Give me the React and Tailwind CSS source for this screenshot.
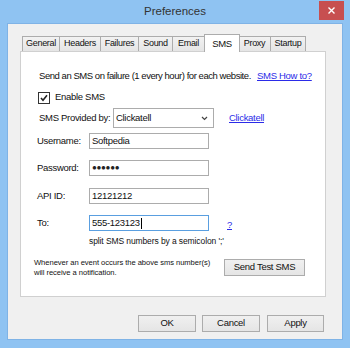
import React from "react";

const F = { fontFamily: '"Liberation Sans", Arial, sans-serif' };

function Tab({ label, w, selected }) {
  if (selected) {
    return (
      <div
        className="h-[18px] -mb-[1px] border border-b-0 border-[#acacac] bg-white flex items-start justify-center pt-[2px] text-[9.5px] tracking-[-0.3px] text-[#111] relative z-10"
        style={{ width: w }}
      >
        {label}
      </div>
    );
  }
  return (
    <div
      className="h-[15px] border border-b-0 border-[#acacac] -ml-[1px] first:ml-0 bg-gradient-to-b from-[#f2f2f2] to-[#e5e5e5] flex items-center justify-center text-[9px] tracking-[-0.3px] text-[#111]"
      style={{ width: w }}
    >
      {label}
    </div>
  );
}

function Btn({ children, w }) {
  return (
    <div
      className="h-[17px] border border-[#acacac] bg-gradient-to-b from-[#f0f0f0] to-[#e5e5e5] flex items-center justify-center text-[9.5px] tracking-[-0.3px] text-[#111] whitespace-nowrap"
      style={{ width: w }}
    >
      {children}
    </div>
  );
}

function Field({ label, value, mt, focused, children }) {
  return (
    <div className="flex items-center h-[16px]" style={{ marginTop: mt }}>
      <div className="w-[52px] pl-[16px] box-content leading-none whitespace-nowrap">{label}</div>
      <div
        className={`w-[120px] h-[16px] border bg-white flex items-center pl-[2px] leading-none ${
          focused ? "border-[#5a9fe0]" : "border-[#acacac]"
        }`}
      >
        {value}
      </div>
      {children}
    </div>
  );
}

export default function App() {
  return (
    <div className="w-[350px] h-[348px] bg-[#8fc3f2] flex flex-col" style={F}>
      <div className="h-[23px] relative flex items-center justify-center">
        <span className="text-[11.5px] text-[#333] mt-[1px]">Preferences</span>
        <div className="absolute right-[6px] top-[1px] w-[25px] h-[19px] bg-[#c74f50] flex items-center justify-center">
          <svg width="7" height="7" viewBox="0 0 7 7">
            <path d="M0.5 0.5 L6.5 6.5 M6.5 0.5 L0.5 6.5" stroke="#fff" strokeWidth="1.4" />
          </svg>
        </div>
      </div>
      <div className="ml-[7px] w-[336px] h-[317px] bg-[#f0f0f0] border border-[#7fb3e6] flex flex-col">
        <div className="flex items-end h-[27px] pl-[14px]">
          <div className="flex items-end">
            <Tab label="General" w={38} />
            <Tab label="Headers" w={42} />
            <Tab label="Failures" w={39} />
            <Tab label="Sound" w={35} />
            <Tab label="Email" w={33} />
            <div className="-ml-[1px]">
              <Tab label="SMS" w={36} selected />
            </div>
            <div className="-ml-[1px]" />
            <Tab label="Proxy" w={33} />
            <Tab label="Startup" w={36} />
          </div>
        </div>
        <div className="ml-[12px] w-[306px] h-[246px] bg-white border border-[#d0d0d0] flex flex-col text-[9.5px] tracking-[-0.3px] text-[#111]">
          <div className="flex items-center h-[15px] mt-[17px]">
            <span className="w-[218px] pl-[18px] box-content whitespace-nowrap tracking-[-0.45px]">
              Send an SMS on failure (1 every hour) for each website.
            </span>
            <span className="text-[#2b2be8] underline whitespace-nowrap">SMS How to?</span>
          </div>
          <div className="flex items-center h-[15px] mt-[6px]">
            <div className="ml-[17px] w-[12px] h-[12px] border border-[#333] bg-white flex items-center justify-center">
              <svg width="8" height="8" viewBox="0 0 8 8">
                <path d="M1 4 L3 6.2 L7 1.3" stroke="#222" strokeWidth="1.6" fill="none" />
              </svg>
            </div>
            <span className="ml-[5px]">Enable SMS</span>
          </div>
          <div className="flex items-center h-[20px] mt-[3px]">
            <span className="w-[74px] pl-[18px] box-content whitespace-nowrap">SMS Provided by:</span>
            <div className="w-[101px] h-[20px] border border-[#acacac] bg-white flex items-center pl-[2px] justify-between pr-[5px]">
              <span>Clickatell</span>
              <svg width="7" height="5" viewBox="0 0 7 5">
                <path d="M1 1 L3.5 3.5 L6 1" stroke="#444" strokeWidth="1.2" fill="none" />
              </svg>
            </div>
            <span className="ml-[15px] text-[#2b2be8] underline">Clickatell</span>
          </div>
          <Field label="Username:" value="Softpedia" mt={5} />
          <Field
            label="Password:"
            value={<span className="text-[8px] tracking-[-0.3px] text-[#222]">●●●●●●</span>}
            mt={11}
          />
          <Field label="API ID:" value="12121212" mt={12} />
          <Field
            label="To:"
            value={
              <span className="flex items-center">
                555-123123
                <span className="inline-block w-[1px] h-[11px] bg-black ml-[1px]" />
              </span>
            }
            mt={11}
            focused
          >
            <span className="ml-[18px] text-[#2b2be8] underline mt-[5px]">?</span>
          </Field>
          <div className="ml-[68px] mt-[3px] h-[14px] flex items-center text-[8.5px] tracking-[-0.1px] whitespace-nowrap">
            split SMS numbers by a semicolon ';'
          </div>
          <div className="flex items-start mt-[10px]">
            <div className="ml-[13px] w-[190px] text-[7.6px] leading-[10px] tracking-[-0.05px] whitespace-nowrap">
              Whenever an event occurs the above sms number(s)
              <br />
              will receive a notification.
            </div>
            <div className="mt-[1px]">
              <Btn w={81}>Send Test SMS</Btn>
            </div>
          </div>
        </div>
        <div className="flex mt-[18px] ml-[130px] gap-[6px]">
          <Btn w={58}>OK</Btn>
          <Btn w={58}>Cancel</Btn>
          <div className="ml-[1px]">
            <Btn w={57}>Apply</Btn>
          </div>
        </div>
      </div>
    </div>
  );
}
